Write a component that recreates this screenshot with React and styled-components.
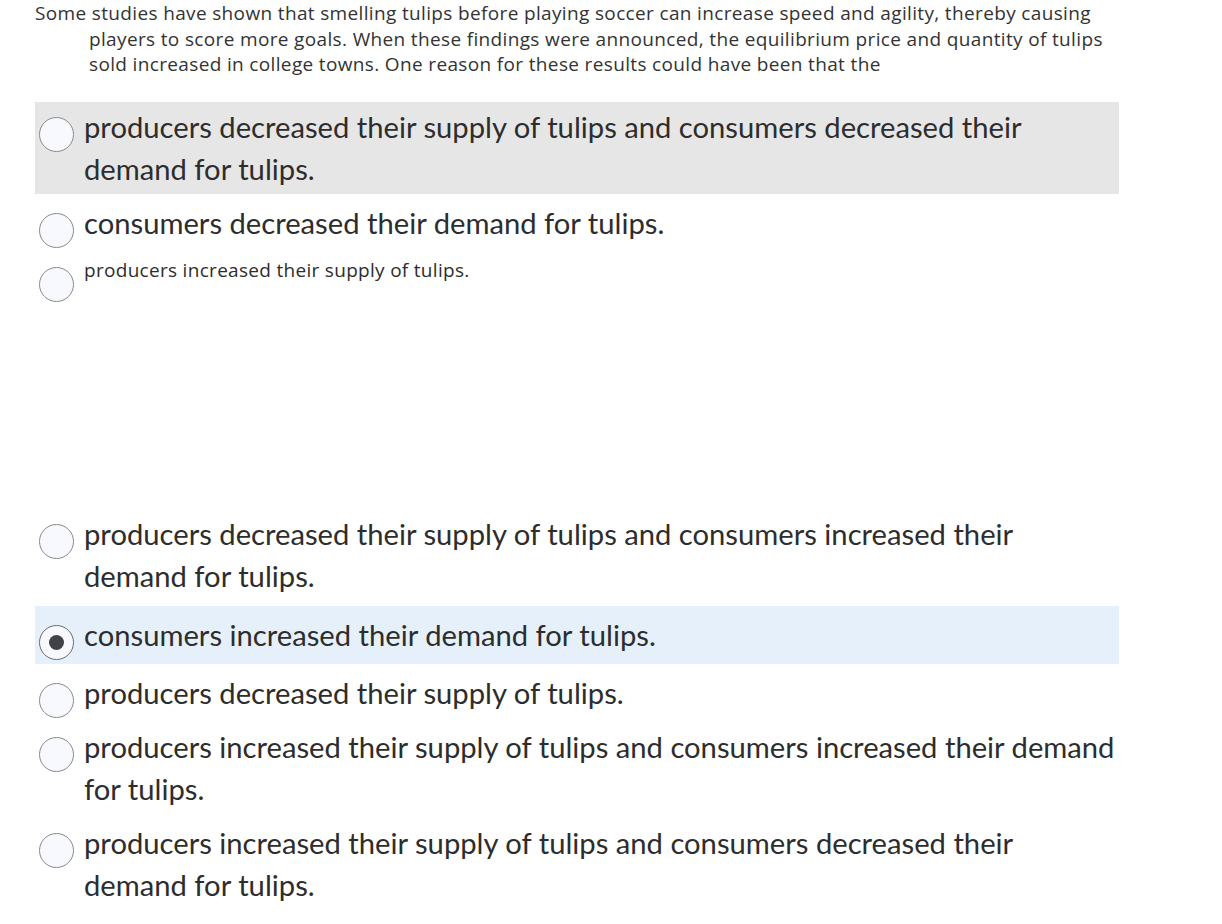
import React from "react";
import styled, { createGlobalStyle } from "styled-components";

const Global = createGlobalStyle`
  html, body { margin: 0; padding: 0; background: #ffffff; }
  body { font-family: "Open Sans", "Liberation Sans", sans-serif; }
`;

const Page = styled.div`
  padding: 1px 0 0 35px;
  width: 1084px;
`;

const Question = styled.p`
  margin: 0 0 24px 0;
  padding-left: 54px;
  text-indent: -54px;
  font-family: "Open Sans", "Liberation Sans", sans-serif;
  font-size: 19px;
  letter-spacing: 0.35px;
  line-height: 25.5px;
  color: #333333;
`;

const Options = styled.div`
  display: flex;
  flex-direction: column;
  gap: 4px;
`;

const Row = styled.label`
  display: flex;
  align-items: flex-start;
  box-sizing: border-box;
  padding: ${(p) => (p.$selected ? "8px 0 8px 4px" : "4px 0 4px 4px")};
  margin-top: ${(p) => (p.$selected ? "1px" : "0")};
  min-height: ${(p) => p.$minHeight || 0}px;
  background: ${(p) =>
    p.$selected ? "#e6f0fa" : p.$hover ? "#e6e6e6" : "transparent"};
  cursor: pointer;
`;

const Radio = styled.span`
  flex: 0 0 auto;
  box-sizing: border-box;
  width: 35px;
  height: 35px;
  margin-top: 11px;
  margin-bottom: -4px;
  border-radius: 50%;
  border: 1px solid ${(p) => (p.$checked ? "#6b6b6b" : "#8a8a8a")};
  background: #f8f9fe;
  display: flex;
  align-items: center;
  justify-content: center;
  &::after {
    content: "";
    display: ${(p) => (p.$checked ? "block" : "none")};
    width: 15px;
    height: 15px;
    border-radius: 50%;
    background: #404346;
  }
`;

const Label = styled.span`
  margin-left: 10px;
  font-family: ${(p) =>
    p.$small
      ? `"Open Sans", "Liberation Sans", sans-serif`
      : `Lato, "Liberation Sans", sans-serif`};
  font-size: ${(p) => (p.$small ? "19px" : "29.2px")};
  letter-spacing: ${(p) => (p.$small ? "0.3px" : "0")};
  line-height: ${(p) => (p.$small ? "25.5px" : "42px")};
  margin-top: ${(p) => (p.$small ? "2px" : "0")};
  color: #2d2d2d;
`;

const options = [
  {
    text: "producers decreased their supply of tulips and consumers decreased their demand for tulips.",
    hover: true,
  },
  { text: "consumers decreased their demand for tulips." },
  { text: "producers increased their supply of tulips.", small: true, minHeight: 253 },
  {
    text: "producers decreased their supply of tulips and consumers increased their demand for tulips.",
  },
  { text: "consumers increased their demand for tulips.", selected: true },
  { text: "producers decreased their supply of tulips." },
  {
    text: "producers increased their supply of tulips and consumers increased their demand for tulips.",
  },
  {
    text: "producers increased their supply of tulips and consumers decreased their demand for tulips.",
  },
];

export default function App() {
  return (
    <>
      <Global />
      <Page>
        <Question>
          Some studies have shown that smelling tulips before playing soccer can
          increase speed and agility, thereby causing players to score more
          goals. When these findings were announced, the equilibrium price and
          quantity of tulips sold increased in college towns. One reason for
          these results could have been that the
        </Question>
        <Options>
          {options.map((o, i) => (
            <Row
              key={i}
              $hover={o.hover}
              $selected={o.selected}
              $minHeight={o.minHeight}
            >
              <Radio $checked={o.selected} />
              <Label $small={o.small}>{o.text}</Label>
            </Row>
          ))}
        </Options>
      </Page>
    </>
  );
}
